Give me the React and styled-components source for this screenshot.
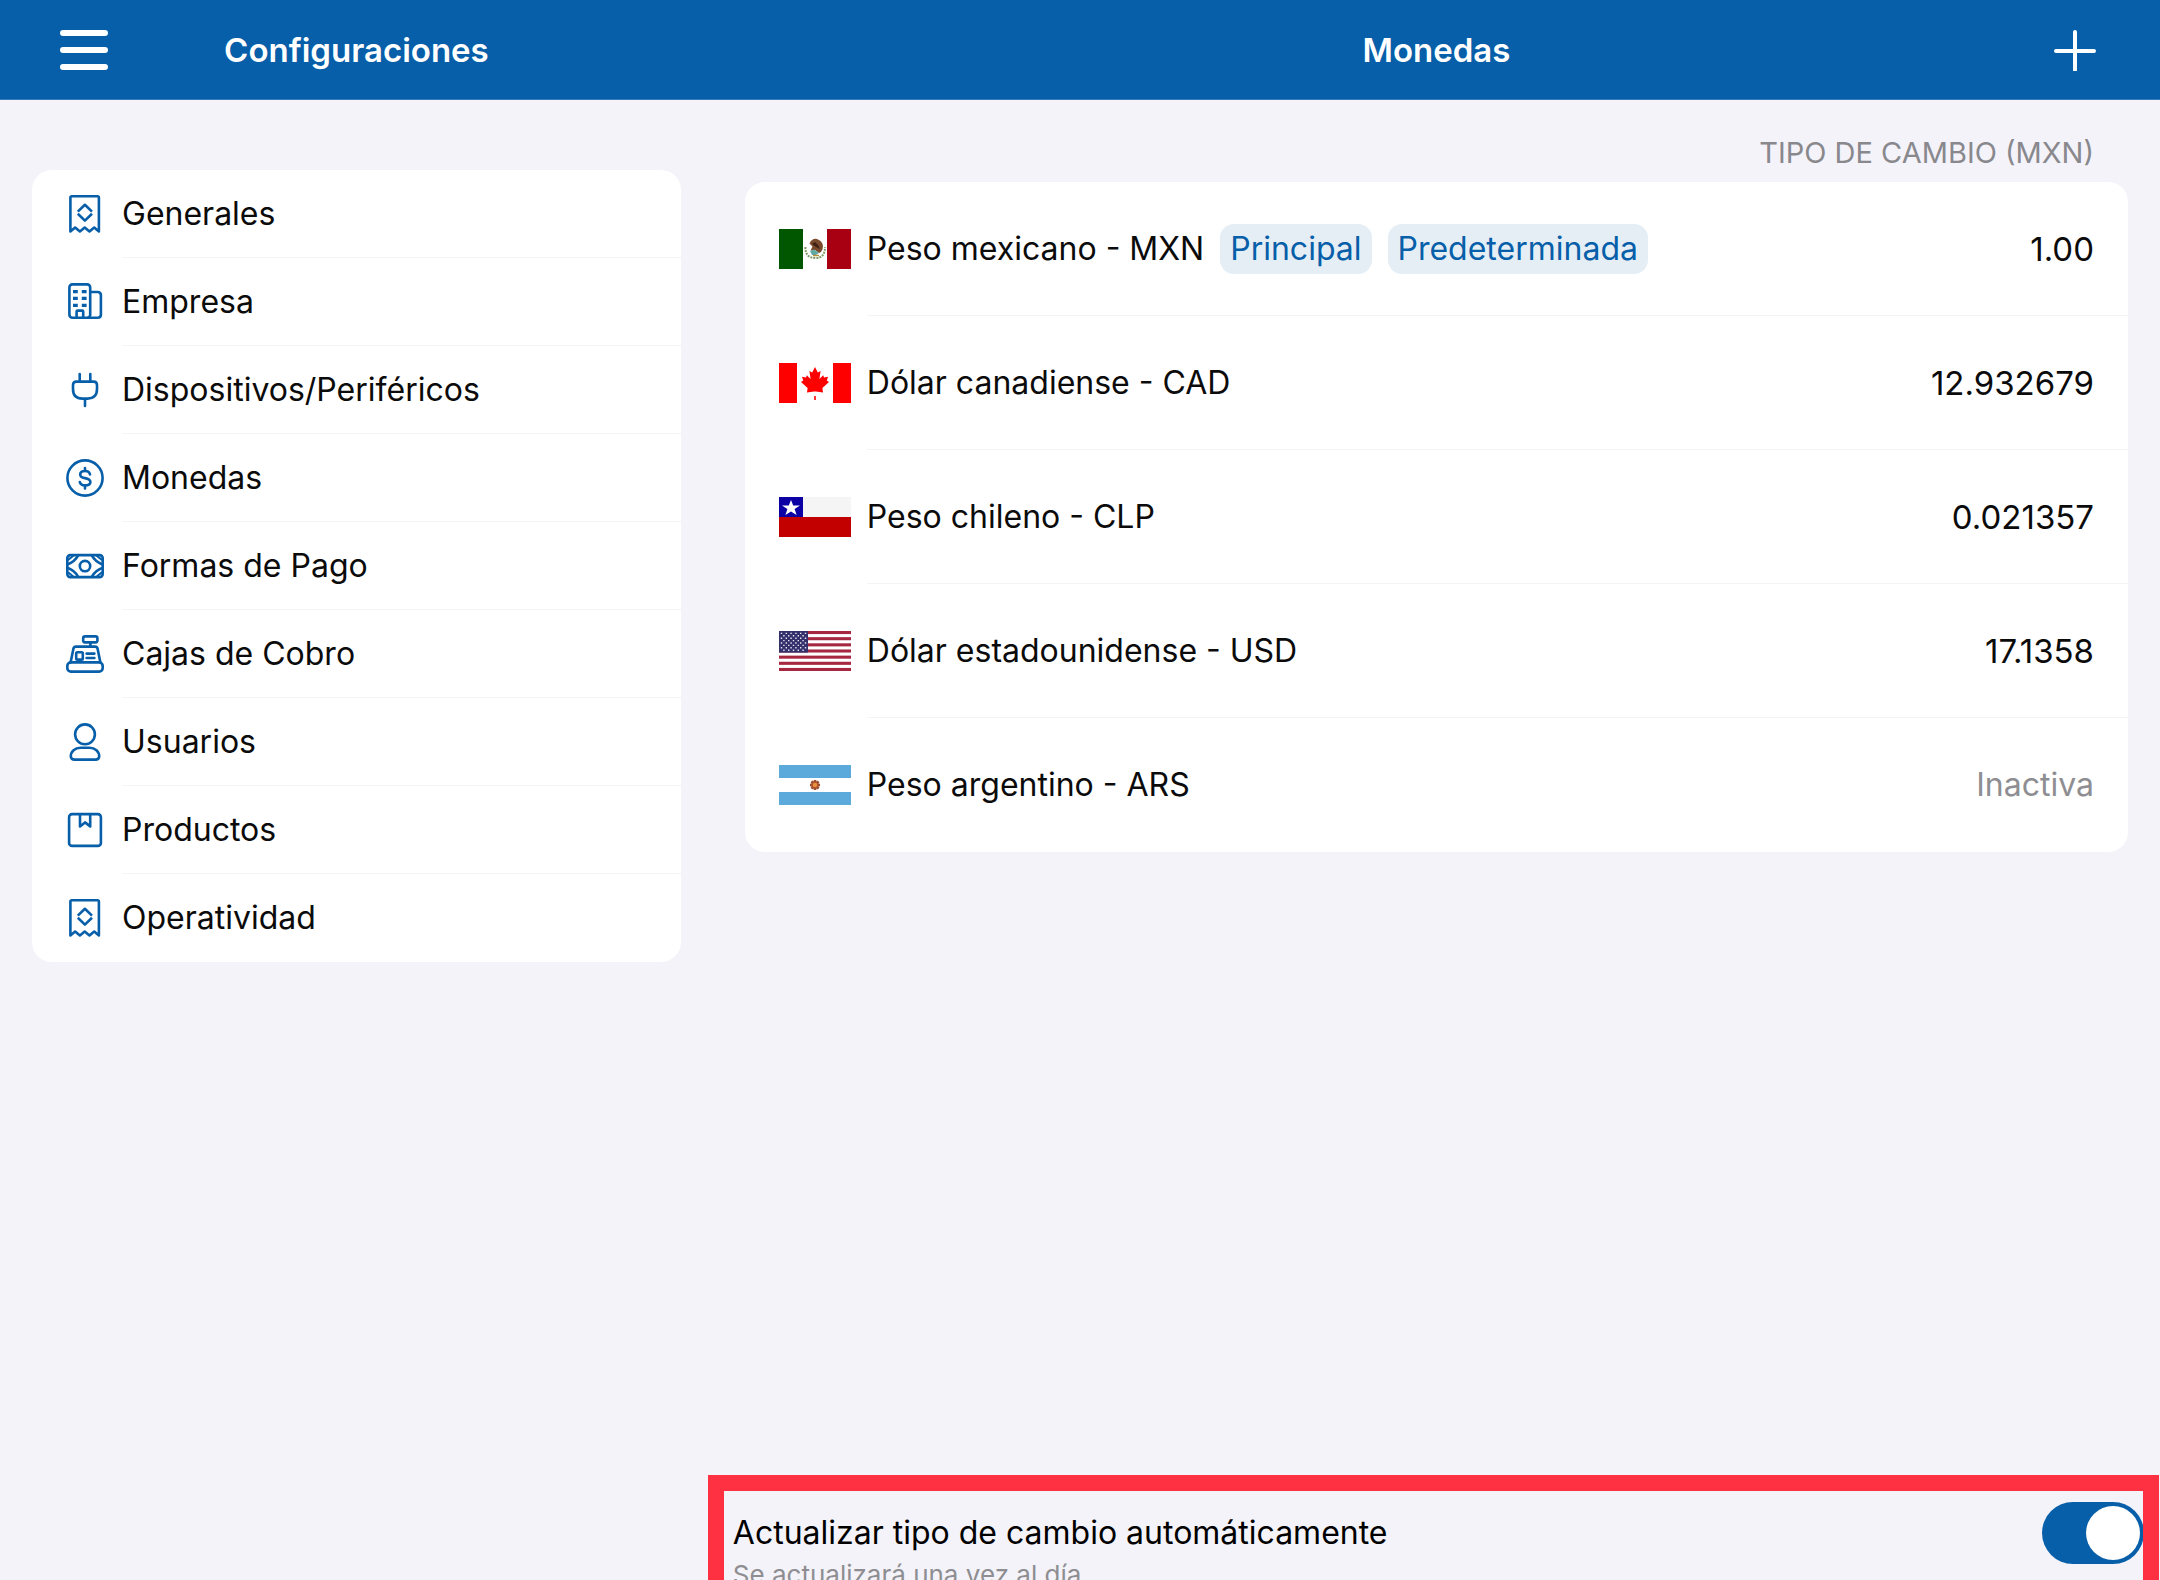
import React, { Component } from 'react';
import styled, { createGlobalStyle } from 'styled-components';

const blue = '#075ea9';

const GlobalStyle = createGlobalStyle`
  *, *::before, *::after {
    box-sizing: border-box;
  }
  body {
    margin: 0;
    background: #f4f3f9;
    color: #0b0b0b;
    font-family: Inter, 'Liberation Sans', sans-serif;
    font-size: 32px;
    line-height: 40px;
  }
`;

const Page = styled.div`
  display: flex;
  flex-direction: column;
  height: 100vh;
  overflow: hidden;
`;

const TopBar = styled.header`
  display: grid;
  grid-template-columns: 33% 1fr;
  flex: none;
  height: 100px;
  background: ${blue};
  border-bottom: 1px solid #3a7bb6;
  color: #fff;
`;

const BarSection = styled.div`
  display: grid;
  grid-template-columns: 120px 1fr 120px;
  align-items: center;
  justify-items: center;
`;

const BarTitle = styled.h1`
  grid-column: 2;
  margin: 0;
  font-size: 33px;
  font-weight: 600;
`;

const IconButton = styled.button`
  display: flex;
  grid-row: 1;
  grid-column: ${props => props.$column};
  justify-self: ${props => props.$side};
  margin: 0 60px;
  padding: 0;
  border: 0;
  background: none;
  color: inherit;
`;

const Content = styled.div`
  display: grid;
  grid-template-columns: 33% 1fr;
  flex: 1;
  min-height: 0;
`;

const Sidebar = styled.nav`
  padding: 70px 32px 0;
`;

const MenuList = styled.ul`
  margin: 0;
  padding: 0;
  border-radius: 20px;
  background: #fff;
  list-style: none;
`;

const MenuLink = styled.a`
  display: flex;
  gap: 18px;
  padding-left: 34px;
  color: inherit;
  text-decoration: none;
`;

const MenuIcon = styled.svg`
  flex: none;
  align-self: center;
  width: 38px;
  height: 38px;
  fill: none;
  stroke: ${blue};
  stroke-width: 2.6;
  stroke-linejoin: round;
  stroke-linecap: round;
`;

const MenuLabel = styled.span`
  flex: 1;
  padding: 24px 0 23px;
  border-bottom: 1px solid #f4f4f6;

  li:last-child & {
    border-color: transparent;
  }
`;

const Pane = styled.main`
  display: flex;
  flex-direction: column;
  justify-content: space-between;
  min-width: 0;
`;

const TableWrap = styled.div`
  padding: 0 32px;
`;

const CurrencyTable = styled.table`
  width: 100%;
  border-spacing: 0;
  border-radius: 20px;
  background: #fff;
`;

const Caption = styled.caption`
  padding: 35px 34px 11px;
  color: #88888d;
  font-size: 29px;
  line-height: 36px;
  text-align: right;
`;

const Cell = styled.td`
  height: 134px;
  padding: 0;
  border-bottom: 1px solid #f4f4f6;

  tr:last-child & {
    border-color: transparent;
  }
`;

const FlagCell = styled(Cell)`
  width: 122px;
  padding-left: 34px;
  border-color: transparent;
`;

const RateCell = styled(Cell)`
  padding-right: 34px;
  color: ${props => (props.$inactive ? '#8e8e92' : 'inherit')};
  font-size: ${props => (props.$inactive ? '32px' : '33px')};
  text-align: right;
`;

const Flag = styled.svg`
  display: block;
  width: 72px;
  height: 40px;
`;

const CurrencyName = styled.div`
  display: flex;
  align-items: center;
  gap: 16px;
`;

const Chip = styled.span`
  padding: 5px 10px;
  border-radius: 14px;
  background: #e5eef5;
  color: ${blue};
`;

const AutoUpdate = styled.section`
  position: relative;
  display: flex;
  flex: none;
  justify-content: space-between;
  height: 105px;
  padding: 27px 16px 0 20px;
`;

const Highlight = styled.div`
  position: absolute;
  inset: 0 1px 0 -5px;
  border: 16px solid #fd3142;
  border-bottom: 0;
  pointer-events: none;
`;

const AutoLabel = styled.label`
  display: block;
  padding-top: 11px;
  color: #000;
`;

const AutoHint = styled.p`
  margin: 4px 0 0;
  color: #8e8e92;
  font-size: 26px;
  line-height: 36px;
`;

const Switch = styled.input`
  appearance: none;
  flex: none;
  width: 102px;
  height: 62px;
  margin: 0;
  padding: 4px;
  border-radius: 31px;
  background: #dcdce0;

  &::before {
    content: '';
    display: block;
    width: 54px;
    height: 54px;
    border-radius: 50%;
    background: #fff;
  }

  &:checked {
    background: ${blue};
  }

  &:checked::before {
    margin-left: auto;
  }
`;

const receipt = (
  <>
    <path d="M4.4 36.4V2.8Q4.4 1.3 5.9 1.3H31.4Q32.9 1.3 32.9 2.8V36.4L28.2 32.6L23.5 36.4L18.7 32.6L13.9 36.4L9.1 32.6Z" />
    <path d="M11.8 16.6L18.9 9.8L26 16.6M11.8 18.8L18.9 25.6L26 18.8" strokeLinecap="butt" />
  </>
);

const building = (
  <>
    <rect x="3.4" y="1.4" width="20.8" height="33.4" rx="3" />
    <path d="M24.2 9H31.6Q34.9 9 34.9 12.2V31.6Q34.9 34.8 31.6 34.8H22" />
    <path d="M10.6 34.5V28.6Q10.6 27.6 11.6 27.6H16.2Q17.2 27.6 17.2 28.6V34.5" />
    <path d="M7 8.6h4.8M15.8 8.6h4.8M7 15.4h4.8M15.8 15.4h4.8M7 22.4h4.8M15.8 22.4h4.8" strokeWidth="3.2" strokeLinecap="butt" />
  </>
);

const plug = (
  <path d="M13.7 3V10.6M24.3 3V10.6M10.4 10.6H27.6Q31 10.6 31 14V18Q31 27.6 21.6 27.6H16.4Q7 27.6 7 18V14Q7 10.6 10.4 10.6ZM19 27.6V35" />
);

const coin = (
  <>
    <circle cx="19" cy="19" r="17.6" />
    <path d="M19 9V12M19 26.4V29.4M24 15.4Q23.2 12 19 12Q14.2 12 14.2 15.4Q14.2 18.2 19 19.1Q24.4 20.2 24.4 23Q24.4 26.4 19 26.4Q14.6 26.4 13.8 23" />
  </>
);

const banknote = (
  <>
    <rect x="1.3" y="8.1" width="35.4" height="22" rx="3" />
    <circle cx="19" cy="19.1" r="5.2" />
    <path d="M12.2 8.4Q8.800 14.600 2 17.200M12.200 29.800Q8.800 23.600 2 21M25.800 8.400Q29.200 14.600 36 17.200M25.800 29.800Q29.200 23.600 36 21" />
    <path d="M7 9L2.400 12.600M7 29.200L2.400 25.600M31 9L35.600 12.600M31 29.200L35.600 25.600" strokeWidth="2" />
  </>
);

const register = (
  <>
    <rect x="17.2" y="1.4" width="14.2" height="6" rx="1.8" />
    <path d="M24.4 7.6V11.4M4.6 27.4L7.4 13.8Q7.9 11.6 10 11.6H29Q31.1 11.6 31.6 13.8L34.4 27.4" />
    <rect x="1.3" y="27.4" width="35.4" height="9.2" rx="3.6" />
    <rect x="10.2" y="17.2" width="6.6" height="7.4" rx="1.2" />
    <path d="M20.6 18.6H28.4M20.6 23H28.4" />
  </>
);

const user = (
  <>
    <circle cx="19" cy="11.3" r="9.9" />
    <path d="M14.4 24.8H23.6C29 24.8 33.2 28.6 33.2 33.2Q33.2 36.6 29.4 36.6H8.6Q4.8 36.6 4.8 33.2C4.8 28.6 9 24.8 14.4 24.8Z" />
  </>
);

const box = (
  <>
    <rect x="3.1" y="3.1" width="31.8" height="31.8" rx="3" />
    <path d="M14 3.2V15.4L19 11.4L24.2 15.4V3.2" />
  </>
);

const menu = [
  { label: 'Generales', icon: receipt },
  { label: 'Empresa', icon: building },
  { label: 'Dispositivos/Periféricos', icon: plug },
  { label: 'Monedas', icon: coin },
  { label: 'Formas de Pago', icon: banknote },
  { label: 'Cajas de Cobro', icon: register },
  { label: 'Usuarios', icon: user },
  { label: 'Productos', icon: box },
  { label: 'Operatividad', icon: receipt },
];

const mexico = (
  <>
    <path fill="#005700" d="M0 0h24v40H0z" />
    <path fill="#a80012" d="M48 0h24v40H48z" />
    <path d="M26.4 18Q26 29 36.500 29Q46 29 46 18" fill="none" stroke="#7c9a62" strokeWidth="2" strokeDasharray="2 1" />
    <path d="M30.5 14.500Q33 9 38 10Q43.500 12 44 17Q43.500 23 40 24L36 21L31.500 21.500L33.500 17.500Z" fill="#7a4a2c" />
    <path d="M33 15L36 13L39 16L41 20L37 18Z" fill="#3f2012" />
    <path d="M31 22L35 20.500L40 24L37 26H33Z" fill="#5fa9a4" />
    <path d="M34 26.500H40" stroke="#b98d3a" strokeWidth="1.4" />
  </>
);

const canada = (
  <>
    <path fill="#f00" d="M0 0h18v40H0zM54 0h18v40H54z" />
    <path
      fill="#f00"
      d="M36 4L38.8 9.4L41.6 8L40.4 16L44.2 12.2L45 14.4L49 13.8L47.8 17.6L50 19L43.4 25L44 29.4L36.8 28.6H35.2L28 29.4L28.6 25L22 19L24.2 17.6L23 13.8L27 14.4L27.8 12.2L31.6 16L30.4 8L33.2 9.4Z"
    />
    <path fill="#f00" d="M35.2 33h1.6v4h-1.6z" />
  </>
);

const chile = (
  <>
    <path fill="#f5f5f5" d="M0 0h72v20H0z" />
    <path fill="#c30000" d="M0 20h72v20H0z" />
    <path fill="#0c00a4" d="M0 0h24v20H0z" />
    <path fill="#fff" d="M12 3L14.2 8.4L21 8.5L15.6 12L17.6 18L12 14.4L6.4 18L8.4 12L3 8.5L9.8 8.4Z" />
  </>
);

const starRows = [2.4, 4.8, 7.2, 9.6, 12, 14.4, 16.8, 19.2];

const usa = (
  <>
    <path fill="#fff" d="M0 0h72v40H0z" />
    {[0, 1, 2, 3, 4, 5, 6].map(i => (
      <rect key={i} y={(i * 80) / 13} width="72" height={40 / 13} fill="#a62840" />
    ))}
    <path fill="#34306c" d="M0 0h29v21.6H0z" />
    {starRows.map((y, i) => (
      <path key={y} d={`M${i % 2 ? 4.2 : 1.8} ${y}H28`} stroke="#e8e6f2" strokeWidth="1.4" strokeDasharray="1.4 3.4" />
    ))}
  </>
);

const argentina = (
  <>
    <path fill="#5ca9dc" d="M0 0h72v13H0zM0 27h72v13H0z" />
    <path d="M36 15v10M31 20h10M32.4 16.4l7.2 7.2M39.6 16.4l-7.2 7.2" stroke="#9b4a2a" strokeWidth="2.6" />
    <circle cx="36" cy="20" r="3" fill="#e8903c" stroke="#a8502c" strokeWidth="1.4" />
  </>
);

const currencies = [
  { name: 'Peso mexicano - MXN', flag: mexico, rate: '1.00', tags: ['Principal', 'Predeterminada'] },
  { name: 'Dólar canadiense - CAD', flag: canada, rate: '12.932679' },
  { name: 'Peso chileno - CLP', flag: chile, rate: '0.021357' },
  { name: 'Dólar estadounidense - USD', flag: usa, rate: '17.1358' },
  { name: 'Peso argentino - ARS', flag: argentina, rate: null },
];

class App extends Component {
  render() {
    return (
      <Page>
        <GlobalStyle />
        <TopBar>
          <BarSection>
            <IconButton type="button" aria-label="Menú" $column={1} $side="start">
              <svg width="48" height="42" viewBox="0 0 48 42" stroke="#fff" strokeWidth="6" strokeLinecap="round">
                <path d="M3 4H45M3 21H45M3 38H45" />
              </svg>
            </IconButton>
            <BarTitle>Configuraciones</BarTitle>
          </BarSection>
          <BarSection>
            <BarTitle>Monedas</BarTitle>
            <IconButton type="button" aria-label="Agregar moneda" $column={3} $side="end">
              <svg width="50" height="42" viewBox="0 0 50 42" stroke="#fff" strokeWidth="4" strokeLinecap="round">
                <path d="M6 22H44M25 3V41" />
              </svg>
            </IconButton>
          </BarSection>
        </TopBar>
        <Content>
          <Sidebar>
            <MenuList>
              {menu.map(item => (
                <li key={item.label}>
                  <MenuLink href="#">
                    <MenuIcon viewBox="0 0 38 38" aria-hidden="true">{item.icon}</MenuIcon>
                    <MenuLabel>{item.label}</MenuLabel>
                  </MenuLink>
                </li>
              ))}
            </MenuList>
          </Sidebar>
          <Pane>
            <TableWrap>
              <CurrencyTable>
                <Caption>TIPO DE CAMBIO (MXN)</Caption>
                <tbody>
                  {currencies.map(currency => (
                    <tr key={currency.name}>
                      <FlagCell>
                        <Flag viewBox="0 0 72 40" aria-hidden="true">{currency.flag}</Flag>
                      </FlagCell>
                      <Cell>
                        <CurrencyName>
                          <span>{currency.name}</span>
                          {(currency.tags || []).map(tag => <Chip key={tag}>{tag}</Chip>)}
                        </CurrencyName>
                      </Cell>
                      <RateCell $inactive={!currency.rate}>{currency.rate || 'Inactiva'}</RateCell>
                    </tr>
                  ))}
                </tbody>
              </CurrencyTable>
            </TableWrap>
            <AutoUpdate>
              <div>
                <AutoLabel htmlFor="auto-update">Actualizar tipo de cambio automáticamente</AutoLabel>
                <AutoHint>Se actualizará una vez al día</AutoHint>
              </div>
              <Switch id="auto-update" type="checkbox" role="switch" defaultChecked />
              <Highlight />
            </AutoUpdate>
          </Pane>
        </Content>
      </Page>
    );
  }
}

export default App;
